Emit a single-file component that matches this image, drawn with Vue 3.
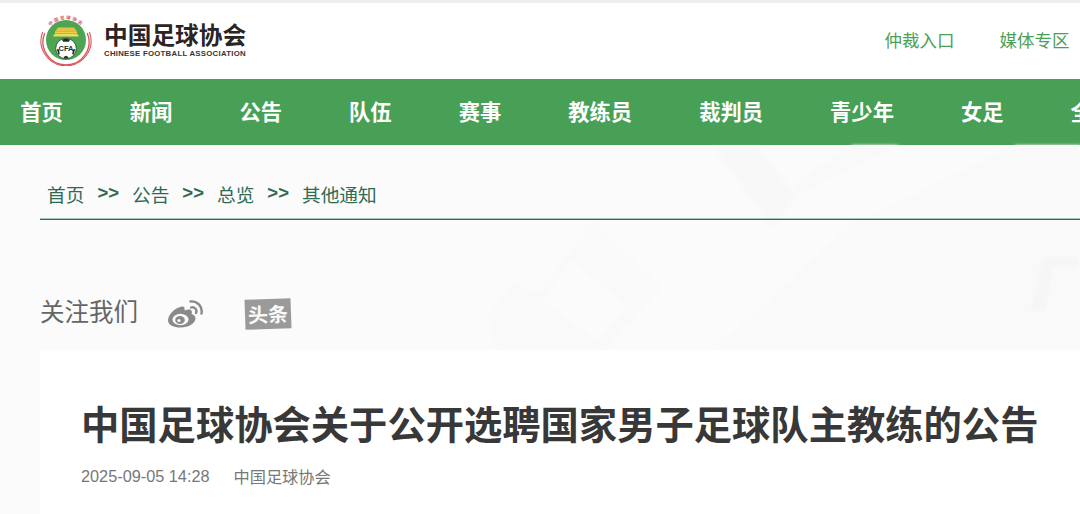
<script setup>
const nav = ['首页', '新闻', '公告', '队伍', '赛事', '教练员', '裁判员', '青少年', '女足', '全国']
const crumbs = ['首页', '公告', '总览', '其他通知']
</script>

<template>
  <div class="page">
    <header class="top">
      <div class="brand">
        <svg class="emblem" viewBox="0 0 52 52" width="52" height="52">
          <circle cx="26" cy="26" r="25.200" fill="#fff" />
          <path d="M2.600 18a25 25 0 1 0 46.800 0" fill="none" stroke="#d9545c" stroke-width="1.100" />
          <path d="M4.800 19a23 23 0 1 0 42.400 0" fill="none" stroke="#d9545c" stroke-width="1.300" />
          <circle cx="26" cy="26" r="20" fill="#4da452" />
          <path d="M15 19.500h22l2 3h-26z" fill="#efdc5a" />
          <path d="M18 13.500h16l2.500 3.500h-21z" fill="#e6c243" />
          <path d="M15 17.300h22v1.700h-22z" fill="#e9d252" />
          <circle cx="26" cy="34.500" r="10.300" fill="#fff" stroke="#1f3d2a" stroke-width="0.800" />
          <path d="M22 25.500l4-1 4 1-1 2.200h-6zM16.800 35l2.200.6.800 4.600-1.500.4zM35.200 35l-2.200.6-.8 4.600 1.500.4zM23.500 43l2.500-1.200 2.500 1.200-1 1.300h-3z" fill="#1f2f27" />
          <text x="26" y="37" text-anchor="middle" class="cfa">CFA</text>
          <path id="emblem-arc" d="M4.500 24a21.700 21.700 0 0 1 43 0" fill="none" />
          <text class="ring"><textPath href="#emblem-arc" startOffset="50%" text-anchor="middle">中国足球协会</textPath></text>
        </svg>
        <div class="wordmark">
          <div class="cn">中国足球协会</div>
          <div class="en">CHINESE FOOTBALL ASSOCIATION</div>
        </div>
      </div>
      <nav class="links">
        <a>仲裁入口</a>
        <a>媒体专区</a>
      </nav>
    </header>

    <nav class="menu">
      <a v-for="item in nav" :key="item">{{ item }}</a>
    </nav>

    <main class="main">
      <svg class="texture" viewBox="0 0 1080 369" preserveAspectRatio="none">
        <path d="M713 2h44l40 48-24 33z" fill="#f8f8f8" />
        <path d="M793 38 853 0h47L797 50z" fill="#f9f9f9" />
        <path d="M713 205 853 78 1017 0h63v205z" fill="#f9f9f9" />
        <path d="M593 77l70 66-60 62H497l-10-33 26-35 24 11z" fill="#f9f9f9" />
        <path d="M572 115l55 47-30 33-55-40z" fill="#fbfbfb" />
        <path d="M1043 112h37v10h-27l-8 44h-14z" fill="#f6f6f6" />
      </svg>

      <div class="crumbs">
        <template v-for="(c, i) in crumbs" :key="c">
          <span v-if="i" class="sep">&gt;&gt;</span>
          <a>{{ c }}</a>
        </template>
      </div>

      <div class="follow">
        <span class="label">关注我们</span>
        <svg class="weibo" viewBox="0 0 36 30" width="36" height="30">
          <path d="M15 8.500C8 9.500 1 16.500 1 22.500c0 4.500 6 7 12.500 7 8 0 15-4.200 15-9.300 0-2.500-2-3.800-4-4.300 1.200-2.700 0-4.500-3-4.500-2 0-3.500 1-4 1 .6-3-.5-4.200-2.500-3.900z" fill="#8a8a8a" />
          <ellipse cx="13.500" cy="21.500" rx="8" ry="5.800" fill="#fafafa" />
          <ellipse cx="13" cy="22" rx="4.800" ry="4" fill="#8a8a8a" />
          <circle cx="12" cy="22.500" r="1.600" fill="#fafafa" />
          <path d="M24 9.500a4 4 0 0 1 5 5.500" fill="none" stroke="#8a8a8a" stroke-width="2.400" stroke-linecap="round" />
          <path d="M23.500 3.500a10 10 0 0 1 11 12" fill="none" stroke="#8a8a8a" stroke-width="2.400" stroke-linecap="round" />
        </svg>
        <span class="toutiao">头条</span>
      </div>

      <article class="card">
        <h1>中国足球协会关于公开选聘国家男子足球队主教练的公告</h1>
        <div class="meta">
          <span class="date">2025-09-05 14:28</span>
          <span>中国足球协会</span>
        </div>
      </article>
    </main>
  </div>
</template>

<style>
html, body { margin: 0; background: #fff; overflow: hidden; }
</style>

<style scoped>
.page {
  width: 1080px;
  height: 514px;
  overflow: hidden;
  display: flex;
  flex-direction: column;
  font-family: "Noto Sans CJK SC", "Liberation Sans", sans-serif;
}
.top {
  height: 72px;
  flex: none;
  border-top: 3px solid #eee;
  display: flex;
  align-items: center;
  justify-content: space-between;
  padding: 0 10.500px 4px 40px;
  background: #fff;
}
.brand { display: flex; align-items: center; gap: 12px; }
.emblem { display: block; margin-top: 2px; }
.cfa { font: 700 7.500px "Liberation Sans", sans-serif; fill: #1f2f27; }
.ring { font: 700 4.500px "Noto Sans CJK SC", sans-serif; fill: #d9545c; letter-spacing: 1.400px; }
.wordmark { display: flex; flex-direction: column; }
.cn {
  font-size: 23.700px;
  line-height: 27px;
  font-weight: 700;
  color: #2b2424;
  white-space: nowrap;
  margin-top: 2px;
}
.en {
  font: 700 7.800px/11px "Liberation Sans", sans-serif;
  letter-spacing: 0.260px;
  color: #3a3535;
  white-space: nowrap;
}
.links { display: flex; gap: 45px; font-size: 17.500px; color: #4ba057; }
.menu {
  height: 66px;
  flex: none;
  box-sizing: border-box;
  padding: 0 0 4px 20.200px;
  background: #48a056;
  display: flex;
  align-items: center;
  gap: 67px;
  color: #fff;
  font-size: 21.300px;
  font-weight: 700;
  white-space: nowrap;
  overflow: hidden;
}
.main {
  position: relative;
  flex: 1;
  background: #fbfbfb;
  padding: 0 0 0 40px;
  display: flex;
  flex-direction: column;
}
.texture {
  position: absolute;
  inset: 0;
  width: 100%;
  height: 100%;
  filter: blur(1.500px);
}
.crumbs, .follow, .card { position: relative; }
.crumbs {
  height: 75px;
  box-sizing: border-box;
  border-bottom: 1px solid #2f6a55;
  box-shadow: inset 0 -1px 0 #a9c4ba;
  display: flex;
  align-items: center;
  gap: 13px;
  padding: 22px 0 0 7px;
  color: #2f6a55;
  font-size: 18.700px;
}
.sep { font: 700 18.500px "Liberation Sans", sans-serif; }
.follow {
  height: 130px;
  box-sizing: border-box;
  padding-top: 73px;
  display: flex;
  align-items: flex-start;
}
.label { font-size: 24.500px; line-height: 36px; color: #666; }
.weibo { margin: 5px 0 0 29px; }
.toutiao {
  margin: 6px 0 0 42px;
  width: 46px;
  height: 30px;
  background: #9a9a9a;
  color: #fafafa;
  font-size: 20px;
  font-weight: 700;
  line-height: 30px;
  text-align: center;
  transform: rotate(-2deg);
}
.card {
  flex: 1;
  background: #fff;
  padding: 48px 0 0 41px;
}
h1 {
  margin: 0;
  font-size: 38.300px;
  line-height: 50px;
  font-weight: 700;
  color: #383838;
  white-space: nowrap;
}
.meta {
  margin-top: 17px;
  display: flex;
  gap: 24px;
  font-size: 16.200px;
  line-height: 22px;
  color: #777;
  white-space: nowrap;
}
.date { font-family: "Liberation Sans", sans-serif; font-size: 16.300px; }
</style>
